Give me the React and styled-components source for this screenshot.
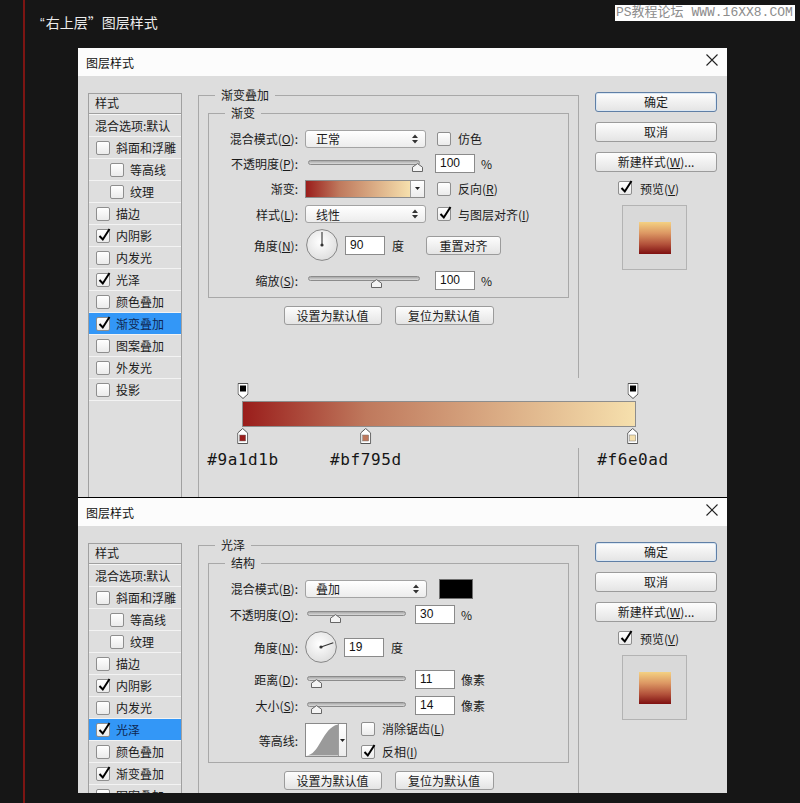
import React from 'react';
import styled, { createGlobalStyle } from 'styled-components';

const GlobalStyle = createGlobalStyle`
  * { box-sizing: border-box; }
  html, body { margin: 0; padding: 0; background: #161616; }
  body { font-family: "Noto Sans CJK SC", "Liberation Sans", sans-serif; color: #1b1b1b; }
`;

const Page = styled.div`
  position: relative;
  width: 800px;
  height: 803px;
  overflow: hidden;
  padding-left: 23px;
  background: #161616;
`;

const Rail = styled.div`
  height: 100%;
  padding-left: 15px;
  border-left: 2px solid #7c1513;
`;

const Heading = styled.div`
  height: 48px;
  padding-top: 12px;
  font-size: 14px;
  line-height: 20px;
  color: #ececec;
`;

const OpenQuote = styled.span`
  font-family: "Liberation Sans", sans-serif;
  margin-right: 1px;
`;

const Watermark = styled.div`
  position: absolute;
  top: 5px;
  right: 5px;
  width: 180px;
  height: 16px;
  padding-left: 1px;
  background: #fff;
  color: #8c8c8c;
  font-family: "Liberation Mono", "Noto Sans CJK SC", monospace;
  font-size: 13px;
  line-height: 16px;
  white-space: nowrap;
`;

const Dialog = styled.div`
  position: relative;
  width: 649px;
  height: ${(p) => p.$h}px;
  margin-left: 38px;
  display: flex;
  flex-direction: column;
  overflow: hidden;
  background: #dddddd;
  border-top: ${(p) => (p.$split ? '1px solid #000' : '0')};
`;

const TitleBar = styled.div`
  height: 28px;
  flex: none;
  display: flex;
  align-items: center;
  justify-content: space-between;
  padding: 0 9px 0 8px;
  background: #fcfcfc;
  font-size: 12px;
  color: #111;
`;

const Body = styled.div`
  flex: 1;
  min-height: 0;
  display: grid;
  grid-template-columns: 94px 381px 122px;
  grid-template-rows: 1fr;
  column-gap: 16px;
  padding: 11px 0 0 10px;
`;

/* left list of effects */
const StylePanel = styled.div`
  margin: 6px 0 -8px;
  border: 1px solid #a0a0a0;
  background: #dedede;
  font-size: 12px;
`;

const PanelHead = styled.div`
  height: 20px;
  line-height: 18px;
  padding-left: 6px;
  border-bottom: 1px solid #a0a0a0;
`;

const PanelBlend = styled.div`
  height: 23px;
  line-height: 21px;
  padding-left: 6px;
  border-top: 1px solid #f6f6f6;
  border-bottom: 1px solid #f3f3f3;
  white-space: nowrap;
`;

const PanelRow = styled.div`
  height: 22px;
  display: flex;
  align-items: center;
  gap: 6px;
  padding-left: ${(p) => (p.$sub ? 21 : 7)}px;
  border-bottom: 1px solid #f3f3f3;
  background: ${(p) => (p.$active ? '#3397f7' : 'transparent')};
  color: ${(p) => (p.$active ? '#0e2752' : '#1b1b1b')};
  white-space: nowrap;
`;

const Box = styled.span`
  position: relative;
  flex: none;
  display: inline-block;
  width: 14px;
  height: 14px;
  border: 1px solid #8e8e8e;
  border-radius: 2px;
  background: linear-gradient(#ffffff, #ebebeb);
`;

const Tick = styled.svg`
  position: absolute;
  left: 0;
  top: -3px;
`;

const Checkbox = ({ checked }) => (
  <Box>
    {checked && (
      <Tick width="14" height="16" viewBox="0 0 14 16">
        <path d="M2.5 9 L5.8 12.5 L12.5 2" fill="none" stroke="#000" strokeWidth="2" />
      </Tick>
    )}
  </Box>
);

/* middle column */
const Group = styled.fieldset`
  margin: 0 0 ${(p) => (p.$open ? '-8px' : '0')};
  min-width: 0;
  padding: ${(p) => (p.$open ? '2px 9px 0' : '5px 0 0')};
  border: 1px solid #a8a8a8;
  display: flex;
  flex-direction: column;
`;

const GroupLegend = styled.legend`
  margin-left: ${(p) => p.$inset}px;
  padding: 0 6px;
  font-size: 12px;
  line-height: 16px;
`;

const FormRow = styled.div`
  height: ${(p) => p.$h}px;
  display: flex;
  align-items: center;
  font-size: 12px;
`;

const FieldLabel = styled.div`
  width: 89px;
  flex: none;
  margin-right: 7px;
  text-align: right;
  white-space: nowrap;
`;

const Select = styled.div`
  width: ${(p) => p.$w}px;
  height: 18px;
  flex: none;
  display: flex;
  align-items: center;
  justify-content: space-between;
  padding: 0 7px 0 10px;
  border: 1px solid #a3a3a3;
  border-radius: 3px;
  background: linear-gradient(#ffffff, #ececec);
`;

const UpDown = () => (
  <svg width="6" height="10" viewBox="0 0 6 10">
    <path d="M0 4 L3 0.5 L6 4 Z M0 6 L3 9.5 L6 6 Z" fill="#333" />
  </svg>
);

const Slider = styled.div`
  position: relative;
  width: ${(p) => p.$w}px;
  height: 14px;
  margin: 4px 0 0 ${(p) => p.$ml}px;
  flex: none;
`;

const Track = styled.div`
  height: 5px;
  margin-top: 1px;
  border: 1px solid #8b8b8b;
  border-radius: 3px;
  background: linear-gradient(#a8a8a8, #dadada);
`;

const Thumb = styled.svg`
  position: absolute;
  top: 4px;
`;

const RangeSlider = ({ w, ml, pos }) => (
  <Slider $w={w} $ml={ml}>
    <Track />
    <Thumb width="11" height="9" viewBox="0 0 11 9" style={{ left: `calc(${pos * 100}% - 5.5px)` }}>
      <path d="M0.5 8.5 V4.2 L5.5 0.6 L10.5 4.2 V8.5 Z" fill="#f4f4f4" stroke="#666" />
    </Thumb>
  </Slider>
);

const NumInput = styled.div`
  width: 40px;
  height: 19px;
  flex: none;
  margin-left: ${(p) => p.$ml}px;
  padding-left: 4px;
  border: 1px solid #8a8a8a;
  background: #fff;
  font: 12px/17px "Liberation Sans", sans-serif;
  color: #111;
`;

const Unit = styled.span`
  margin-left: ${(p) => p.$ml || 6}px;
  white-space: nowrap;
`;

const CheckLine = styled.label`
  display: flex;
  align-items: center;
  gap: 7px;
  margin-left: ${(p) => p.$ml || 0}px;
  white-space: nowrap;
`;

const GradientPick = styled.div`
  width: 120px;
  height: 18px;
  flex: none;
  display: flex;
  border: 1px solid #8c8c8c;
`;

const GradientSwatch = styled.div`
  flex: 1;
  background: linear-gradient(to right, #9a1d1b, #bf795d 32%, #f6e0ad);
`;

const DropStrip = styled.div`
  width: ${(p) => p.$w}px;
  flex: none;
  display: flex;
  align-items: center;
  justify-content: center;
  border-left: 1px solid #a0a0a0;
  background: linear-gradient(#ffffff, #ececec);
`;

const DropArrow = () => (
  <svg width="5" height="3" viewBox="0 0 5 3">
    <path d="M0 0 H5 L2.5 3 Z" fill="#222" />
  </svg>
);

const DialWrap = styled.svg`
  flex: none;
  margin-left: ${(p) => p.$ml}px;
`;

const Dial = ({ angle, ml }) => {
  const r = (angle * Math.PI) / 180;
  const x = 16 + 13 * Math.cos(r);
  const y = 16 - 13 * Math.sin(r);
  return (
    <DialWrap width="32" height="32" viewBox="0 0 32 32" $ml={ml}>
      <defs>
        <radialGradient id={`dial${angle}`} cx="0.45" cy="0.4" r="0.65">
          <stop offset="0" stopColor="#ffffff" />
          <stop offset="1" stopColor="#dcdcdc" />
        </radialGradient>
      </defs>
      <circle cx="16" cy="16" r="15.4" fill={`url(#dial${angle})`} stroke="#878787" />
      <line x1="16" y1="16" x2={x} y2={y} stroke="#333" strokeWidth="1.1" />
      <circle cx="16" cy="16" r="1.6" fill="#333" />
    </DialWrap>
  );
};

const PushButton = styled.div`
  width: ${(p) => (p.$w ? `${p.$w}px` : 'auto')};
  height: ${(p) => p.$h || 20}px;
  flex: none;
  margin-left: ${(p) => p.$ml || 0}px;
  border: 1px solid ${(p) => (p.$primary ? '#5f7fa6' : '#9b9b9b')};
  border-radius: 3px;
  background: linear-gradient(#fdfdfd, #e4e4e4);
  box-shadow: ${(p) => (p.$primary ? 'inset 0 0 0 1px #dbe7f3' : 'none')};
  font-size: 12px;
  line-height: ${(p) => (p.$h || 20) - 2}px;
  text-align: center;
  color: #1b1b1b;
  white-space: nowrap;
`;

const ColorChip = styled.div`
  width: 34px;
  height: 20px;
  flex: none;
  margin-left: 12px;
  border: 1px solid #6f6f6f;
  background: #000;
`;

const Contour = styled.div`
  width: 42px;
  height: 34px;
  flex: none;
  display: flex;
  border: 1px solid #8a8a8a;
  background: #fff;
`;

const CheckStack = styled.div`
  display: flex;
  flex-direction: column;
  gap: 6px;
  margin-left: 14px;
`;

const ButtonRow = styled.div`
  display: flex;
  justify-content: center;
  gap: 13px;
  margin-top: 8px;
`;

/* right column */
const SideCol = styled.div`
  margin-top: 5px;
  display: flex;
  flex-direction: column;
  gap: 10px;
`;

const PreviewCheck = styled.label`
  height: 14px;
  margin-top: -1px;
  padding-left: 23px;
  display: flex;
  align-items: center;
  gap: 8px;
  font-size: 12px;
`;

const PreviewFrame = styled.div`
  width: 65px;
  height: 65px;
  margin-left: 27px;
  display: flex;
  align-items: center;
  justify-content: center;
  border: 1px solid #b3b3b3;
  background: #d9d9d9;
`;

const PreviewSwatch = styled.div`
  width: 32px;
  height: 32px;
  background: linear-gradient(to bottom, #f4d182, #dc9763 35%, #b2503a 70%, #7e1010);
`;

/* gradient annotation laid over the first dialog */
const GradientNote = styled.div`
  position: absolute;
  left: 150px;
  top: 330px;
  width: 422px;
  height: 70px;
  padding: 0 14px;
  background: #dddddd;
`;

const StopTrack = styled.div`
  position: relative;
  height: ${(p) => p.$h}px;
  margin: 0 3px 0 1px;
`;

const NoteBar = styled.div`
  height: 26px;
  border: 1px solid #8d8d8d;
  background: linear-gradient(to right, #9a1d1b 0%, #bf795d 31.5%, #f6e0ad 100%);
`;

const OpacityStop = styled.svg`
  position: absolute;
  bottom: 2px;
  transform: translateX(-50%);
`;

const ColorStop = styled.div`
  position: absolute;
  top: 1px;
  display: flex;
  flex-direction: column;
  align-items: center;
  transform: translateX(-50%);
`;

const StopLabel = styled.div`
  margin-top: 8px;
  font-family: "DejaVu Sans Mono", "Liberation Mono", monospace;
  font-size: 16px;
  line-height: 16px;
  letter-spacing: 0.6px;
  color: #161616;
  white-space: nowrap;
`;

const colorStops = [
  { pos: 0, color: '#9a1d1b' },
  { pos: 31.5, color: '#bf795d' },
  { pos: 100, color: '#f6e0ad' },
];

const GradientAnnotation = () => (
  <GradientNote>
    <StopTrack $h={23}>
      {[0, 100].map((pos) => (
        <OpacityStop key={pos} width="11" height="16" viewBox="0 0 11 16" style={{ left: `${pos}%` }}>
          <path d="M0.5 0.5 H10.5 V11 L5.5 15.5 L0.5 11 Z" fill="#fff" stroke="#555" />
          <rect x="2.5" y="2.5" width="6" height="6" fill="#000" />
        </OpacityStop>
      ))}
    </StopTrack>
    <NoteBar />
    <StopTrack $h={21}>
      {colorStops.map((s) => (
        <ColorStop key={s.color} style={{ left: `${s.pos}%` }}>
          <svg width="11" height="16" viewBox="0 0 11 16">
            <path d="M0.5 15.5 H10.5 V5 L5.5 0.5 L0.5 5 Z" fill="#fff" stroke="#555" />
            <rect x="2.5" y="7" width="6" height="6" fill={s.color} stroke="#777" strokeWidth="0.5" />
          </svg>
          <StopLabel>{s.color}</StopLabel>
        </ColorStop>
      ))}
    </StopTrack>
  </GradientNote>
);

const effects = [
  { label: '斜面和浮雕' },
  { label: '等高线', sub: true },
  { label: '纹理', sub: true },
  { label: '描边' },
  { label: '内阴影', checked: true },
  { label: '内发光' },
  { label: '光泽', checked: true },
  { label: '颜色叠加' },
  { label: '渐变叠加', checked: true },
  { label: '图案叠加' },
  { label: '外发光' },
  { label: '投影' },
];

const CloseIcon = () => (
  <svg width="12" height="12" viewBox="0 0 12 12" style={{ marginTop: -4 }}>
    <path d="M0.5 0.5 L11.5 11.5 M11.5 0.5 L0.5 11.5" stroke="#222" strokeWidth="1.1" />
  </svg>
);

const EffectList = ({ active }) => (
  <StylePanel>
    <PanelHead>样式</PanelHead>
    <PanelBlend>混合选项:默认</PanelBlend>
    {effects.map((e) => (
      <PanelRow key={e.label} $sub={e.sub} $active={e.label === active}>
        <Checkbox checked={e.checked} />
        <span>{e.label}</span>
      </PanelRow>
    ))}
  </StylePanel>
);

const SidePanel = () => (
  <SideCol>
    <PushButton $primary>确定</PushButton>
    <PushButton>取消</PushButton>
    <PushButton>
      新建样式(<u>W</u>)...
    </PushButton>
    <PreviewCheck>
      <Checkbox checked />
      <span>预览(<u>V</u>)</span>
    </PreviewCheck>
    <PreviewFrame>
      <PreviewSwatch />
    </PreviewFrame>
  </SideCol>
);

const DefaultButtons = () => (
  <ButtonRow>
    <PushButton $w={98} $h={19}>设置为默认值</PushButton>
    <PushButton $w={99} $h={19}>复位为默认值</PushButton>
  </ButtonRow>
);

const DialogFrame = ({ h, split, active, children, overlay }) => (
  <Dialog $h={h} $split={split}>
    <TitleBar>
      图层样式
      <CloseIcon />
    </TitleBar>
    <Body>
      <EffectList active={active} />
      {children}
      <SidePanel />
    </Body>
    {overlay}
  </Dialog>
);

const GradientOverlayDialog = () => (
  <DialogFrame h={449} active="渐变叠加" overlay={<GradientAnnotation />}>
    <Group $open>
      <GroupLegend $inset={7}>渐变叠加</GroupLegend>
      <Group>
        <GroupLegend $inset={16}>渐变</GroupLegend>
        <FormRow $h={25}>
          <FieldLabel>混合模式(<u>O</u>):</FieldLabel>
          <Select $w={121}>
            正常
            <UpDown />
          </Select>
          <CheckLine $ml={11}>
            <Checkbox />
            <span>仿色</span>
          </CheckLine>
        </FormRow>
        <FormRow $h={25}>
          <FieldLabel>不透明度(<u>P</u>):</FieldLabel>
          <RangeSlider w={112} ml={3} pos={0.98} />
          <NumInput $ml={15}>100</NumInput>
          <Unit>%</Unit>
        </FormRow>
        <FormRow $h={25}>
          <FieldLabel>渐变:</FieldLabel>
          <GradientPick>
            <GradientSwatch />
            <DropStrip $w={14}>
              <DropArrow />
            </DropStrip>
          </GradientPick>
          <CheckLine $ml={12}>
            <Checkbox />
            <span>反向(<u>R</u>)</span>
          </CheckLine>
        </FormRow>
        <FormRow $h={26}>
          <FieldLabel>样式(<u>L</u>):</FieldLabel>
          <Select $w={121}>
            线性
            <UpDown />
          </Select>
          <CheckLine $ml={11}>
            <Checkbox checked />
            <span>与图层对齐(<u>I</u>)</span>
          </CheckLine>
        </FormRow>
        <FormRow $h={36}>
          <FieldLabel>角度(<u>N</u>):</FieldLabel>
          <Dial angle={90} ml={1} />
          <NumInput $ml={7}>90</NumInput>
          <Unit $ml={7}>度</Unit>
          <PushButton $w={75} $h={19} $ml={22}>重置对齐</PushButton>
        </FormRow>
        <FormRow $h={34}>
          <FieldLabel>缩放(<u>S</u>):</FieldLabel>
          <RangeSlider w={112} ml={3} pos={0.61} />
          <NumInput $ml={15}>100</NumInput>
          <Unit>%</Unit>
        </FormRow>
      </Group>
      <DefaultButtons />
    </Group>
  </DialogFrame>
);

const SatinDialog = () => (
  <DialogFrame h={296} split active="光泽">
    <Group $open>
      <GroupLegend $inset={7}>光泽</GroupLegend>
      <Group>
        <GroupLegend $inset={16}>结构</GroupLegend>
        <FormRow $h={25}>
          <FieldLabel>混合模式(<u>B</u>):</FieldLabel>
          <Select $w={122}>
            叠加
            <UpDown />
          </Select>
          <ColorChip />
        </FormRow>
        <FormRow $h={27}>
          <FieldLabel>不透明度(<u>O</u>):</FieldLabel>
          <RangeSlider w={99} ml={2} pos={0.29} />
          <NumInput $ml={9}>30</NumInput>
          <Unit>%</Unit>
        </FormRow>
        <FormRow $h={38}>
          <FieldLabel>角度(<u>N</u>):</FieldLabel>
          <Dial angle={19} ml={0} />
          <NumInput $ml={7}>19</NumInput>
          <Unit $ml={7}>度</Unit>
        </FormRow>
        <FormRow $h={27}>
          <FieldLabel>距离(<u>D</u>):</FieldLabel>
          <RangeSlider w={99} ml={2} pos={0.1} />
          <NumInput $ml={9}>11</NumInput>
          <Unit>像素</Unit>
        </FormRow>
        <FormRow $h={25}>
          <FieldLabel>大小(<u>S</u>):</FieldLabel>
          <RangeSlider w={99} ml={2} pos={0.1} />
          <NumInput $ml={9}>14</NumInput>
          <Unit>像素</Unit>
        </FormRow>
        <FormRow $h={44}>
          <FieldLabel>等高线:</FieldLabel>
          <Contour>
            <svg width="33" height="32" viewBox="0 0 33 32">
              <path d="M0 32 C 14 32, 17 3, 33 0 L33 32 Z" fill="#9a9a9a" />
            </svg>
            <DropStrip $w={8}>
              <DropArrow />
            </DropStrip>
          </Contour>
          <CheckStack>
            <CheckLine>
              <Checkbox />
              <span>消除锯齿(<u>L</u>)</span>
            </CheckLine>
            <CheckLine>
              <Checkbox checked />
              <span>反相(<u>I</u>)</span>
            </CheckLine>
          </CheckStack>
        </FormRow>
      </Group>
      <DefaultButtons />
    </Group>
  </DialogFrame>
);

export default function App() {
  return (
    <Page>
      <GlobalStyle />
      <Rail>
        <Heading>
          <OpenQuote>“</OpenQuote>右上层”图层样式
        </Heading>
        <GradientOverlayDialog />
        <SatinDialog />
      </Rail>
      <Watermark>PS教程论坛 WWW.16XX8.COM</Watermark>
    </Page>
  );
}
